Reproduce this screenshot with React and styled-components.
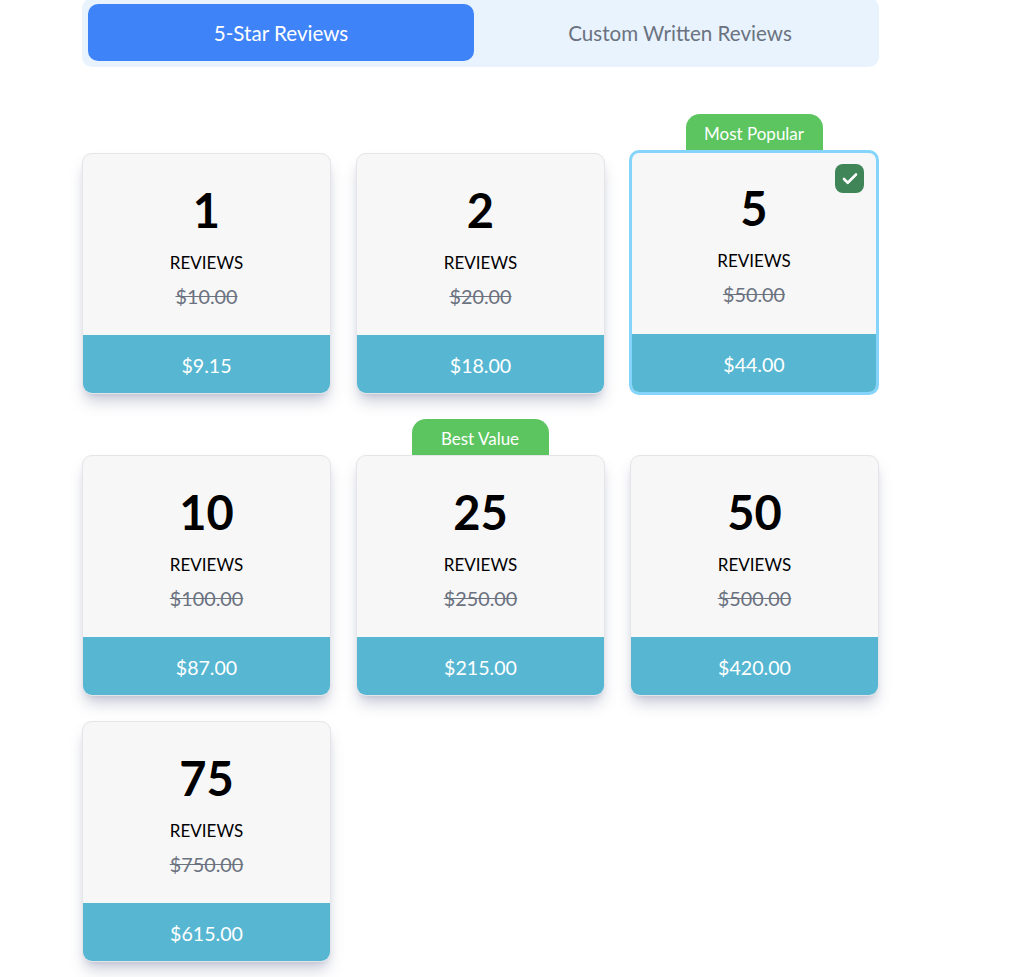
import { styled, createGlobalStyle } from "styled-components";
import { Check } from "lucide-react";

const packages = [
  { count: 1, was: "$10.00", price: "$9.15" },
  { count: 2, was: "$20.00", price: "$18.00" },
  { count: 5, was: "$50.00", price: "$44.00", badge: "Most Popular", selected: true },
  { count: 10, was: "$100.00", price: "$87.00" },
  { count: 25, was: "$250.00", price: "$215.00", badge: "Best Value" },
  { count: 50, was: "$500.00", price: "$420.00" },
  { count: 75, was: "$750.00", price: "$615.00" },
];

const GlobalStyle = createGlobalStyle`
  html, body {
    margin: 0;
    background: #fff;
    overflow: hidden;
  }
  body {
    font-family: Lato, "Liberation Sans", sans-serif;
  }
`;

const Page = styled.div`
  width: 797px;
  height: 979px;
  margin: -2px 0 0 82px;
`;

const Tabs = styled.div`
  display: flex;
  gap: 13px;
  padding: 6px;
  height: 69px;
  box-sizing: border-box;
  background: #e8f3fe;
  border-radius: 10px;
`;

const Tab = styled.div`
  flex: 1;
  display: flex;
  align-items: center;
  justify-content: center;
  border-radius: 10px;
  font-size: 20.6px;
  background: ${(p) => (p.$active ? "#3f83f8" : "transparent")};
  color: ${(p) => (p.$active ? "#fff" : "#6b7280")};
`;

const Grid = styled.div`
  display: grid;
  grid-template-columns: repeat(3, 249px);
  column-gap: 25px;
  row-gap: 25px;
  margin-top: 47px;
`;

const Item = styled.div`
  display: flex;
  flex-direction: column;
  align-items: center;
  justify-content: flex-end;
`;

const Badge = styled.div`
  width: 137px;
  height: 36px;
  margin-right: 1px;
  box-sizing: border-box;
  padding-top: 3px;
  display: flex;
  align-items: center;
  justify-content: center;
  background: #5cc560;
  color: #fff;
  font-size: 17px;
  border-radius: 14px 14px 0 0;
`;

const Card = styled.div`
  position: relative;
  align-self: stretch;
  box-sizing: border-box;
  height: ${(p) => (p.$selected ? "245px" : "241px")};
  margin: ${(p) => (p.$selected ? "0 0 -1px -1px" : "0")};
  border: ${(p) => (p.$selected ? "3px solid #84d4fb" : "1px solid #e4e4e9")};
  border-radius: 10px;
  overflow: hidden;
  background: #f7f7f8;
  display: flex;
  flex-direction: column;
  box-shadow: ${(p) =>
    p.$selected
      ? "none"
      : "0 10px 15px -3px rgba(80, 85, 130, 0.3), 0 4px 6px -4px rgba(80, 85, 130, 0.22)"};
`;

const Body = styled.div`
  flex: 1;
  display: flex;
  flex-direction: column;
  align-items: center;
  padding-top: ${(p) => (p.$selected ? "26px" : "27px")};
`;

const Count = styled.div`
  font-size: 47px;
  font-weight: 700;
  line-height: 58px;
  color: #000;
`;

const Unit = styled.div`
  margin-top: 13px;
  font-size: 17px;
  line-height: 22px;
  color: #000;
`;

const Was = styled.div`
  margin-top: 10px;
  font-size: 19.8px;
  line-height: 24px;
  color: #6b7280;
  text-decoration: line-through;
`;

const Price = styled.div`
  height: 58px;
  flex-shrink: 0;
  box-sizing: border-box;
  padding-top: 2px;
  display: flex;
  align-items: center;
  justify-content: center;
  background: #57b7d2;
  color: #fff;
  font-size: 19.6px;
`;

const Tick = styled.div`
  position: absolute;
  top: 11px;
  right: 12px;
  width: 29px;
  height: 29px;
  display: flex;
  align-items: center;
  justify-content: center;
  border-radius: 8px;
  background: #3f8558;
  color: #fff;
`;

export default function App() {
  return (
    <Page>
      <GlobalStyle />
      <Tabs>
        <Tab $active>5-Star Reviews</Tab>
        <Tab>Custom Written Reviews</Tab>
      </Tabs>
      <Grid>
        {packages.map((item) => (
          <Item key={item.count}>
            {item.badge && <Badge>{item.badge}</Badge>}
            <Card $selected={item.selected}>
              {item.selected && (
                <Tick>
                  <Check size={18} strokeWidth={3.5} />
                </Tick>
              )}
              <Body $selected={item.selected}>
                <Count>{item.count}</Count>
                <Unit>REVIEWS</Unit>
                <Was>{item.was}</Was>
              </Body>
              <Price>{item.price}</Price>
            </Card>
          </Item>
        ))}
      </Grid>
    </Page>
  );
}
